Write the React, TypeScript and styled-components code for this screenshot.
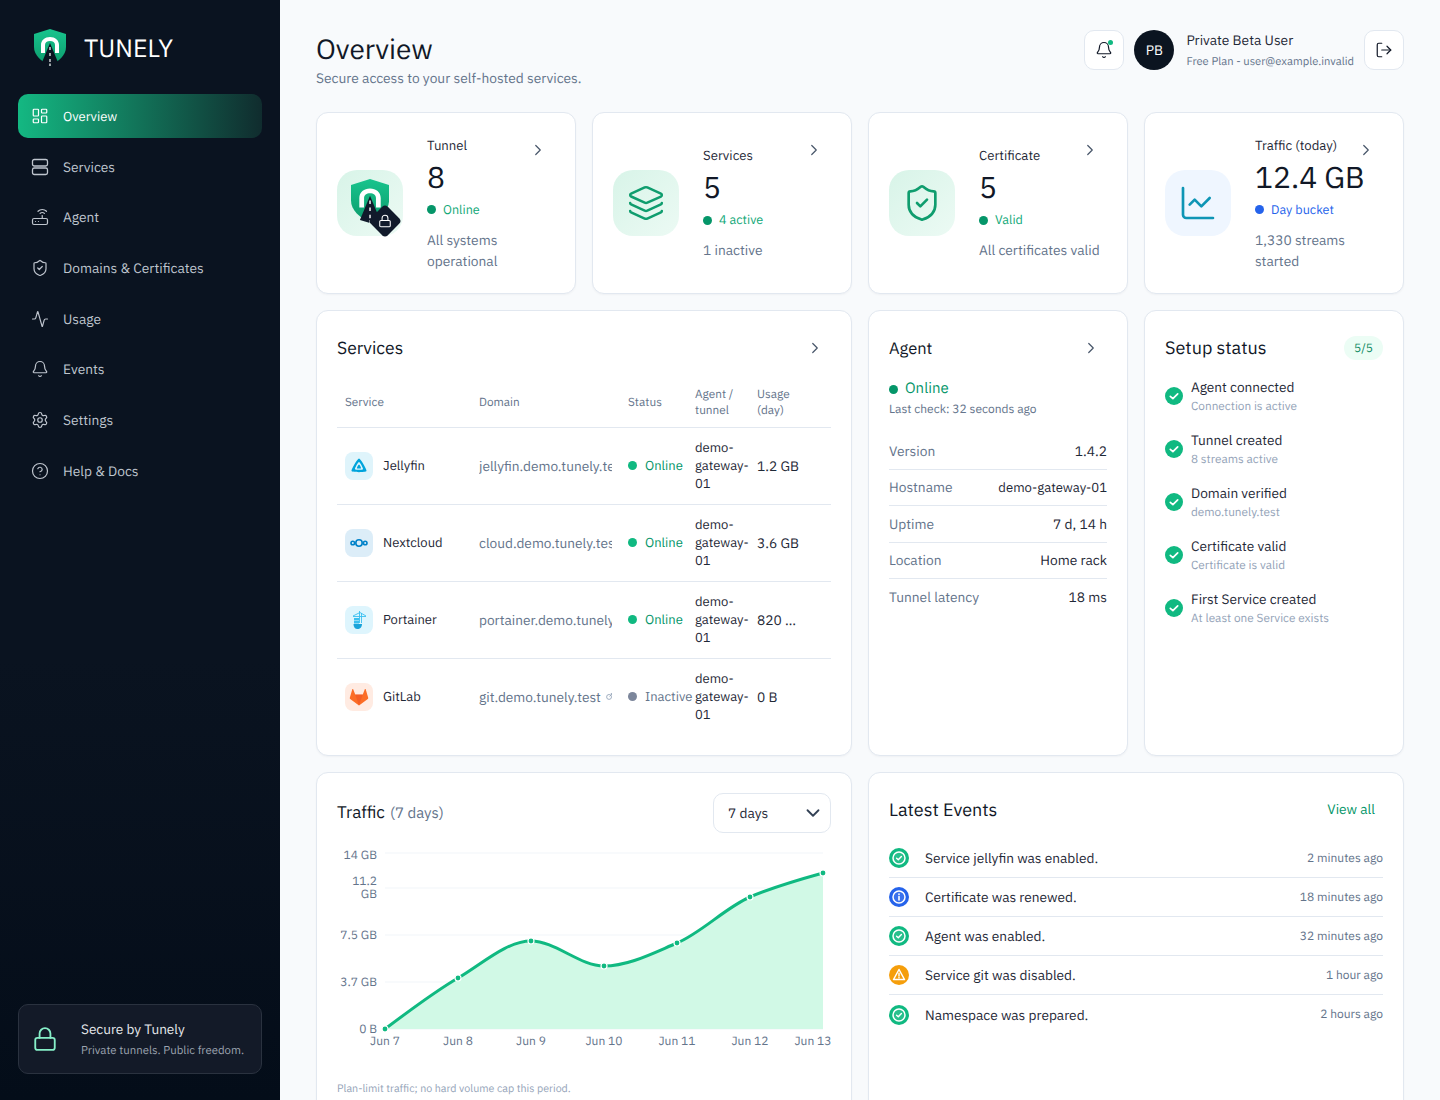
import React from 'react';
import styled, { createGlobalStyle } from 'styled-components';
import {
  Activity, Bell, ChartLine, ChevronDown, ChevronRight, CircleHelp, Layers, LayoutDashboard,
  Lock, LogOut, Router, Settings, ShieldCheck,
} from 'lucide-react';

const GlobalStyle = createGlobalStyle`
  html, body {
    margin: 0;
    padding: 0;
    height: 100%;
    overflow: hidden;
    background: #f8fafc;
    color: #111827;
    font-family: "IBM Plex Sans", Inter, "Liberation Sans", sans-serif;
    text-rendering: geometricPrecision;
  }
  * { box-sizing: border-box; }
`;

const Shell = styled.div`
  display: flex;
  height: 100vh;
  overflow: hidden;
`;

// --- sidebar ---

const Sidebar = styled.aside`
  width: 280px;
  flex: none;
  display: flex;
  flex-direction: column;
  padding: 29px 18px 26px;
  background: linear-gradient(180deg, #0a1320 0%, #0a1320 60%, #040d19 100%);
`;

const Brand = styled.div`
  display: flex;
  align-items: center;
  gap: 18px;
  padding-left: 16px;
  height: 37px;
  margin-bottom: 28px;
`;

const BrandName = styled.span`
  font-size: 25px;
  line-height: 36px;
  color: #ffffff;
`;

const Nav = styled.nav`
  display: flex;
  flex-direction: column;
  gap: 6.7px;
`;

const NavItem = styled.a<{ $active?: boolean }>`
  display: flex;
  align-items: center;
  gap: 14px;
  height: 44px;
  padding-left: 13px;
  border-radius: 10px;
  font-size: ${(p) => (p.$active ? '13px' : '13.75px')};
  color: ${(p) => (p.$active ? '#ffffff' : '#bfc5ce')};
  background: ${(p) => (p.$active ? 'linear-gradient(90deg, #14b882 0%, #102c2e 100%)' : 'transparent')};
  svg { flex: none; }
`;

const SecureCard = styled.div`
  margin-top: auto;
  height: 70px;
  display: flex;
  align-items: center;
  gap: 23px;
  padding-left: 13px;
  border-radius: 10px;
  background: #131a28;
  border: 1px solid #2a323f;
`;

const SecureTitle = styled.div`
  font-size: 13.6px;
  line-height: 18px;
  color: #e5e7eb;
`;

const SecureSub = styled.div`
  font-size: 11.4px;
  line-height: 16px;
  margin-top: 5px;
  color: #9ca3af;
`;

// --- header ---

const Main = styled.main`
  flex: 1;
  min-width: 0;
  padding: 30px 36px;
`;

const Header = styled.header`
  display: flex;
  justify-content: space-between;
  height: 82px;
`;

const PageTitle = styled.h1`
  margin: 0;
  font-size: 28px;
  line-height: 37px;
  font-weight: 400;
  color: #111827;
`;

const PageSub = styled.p`
  margin: 1px 0 0;
  font-size: 13.75px;
  line-height: 20px;
  color: #64748b;
`;

const HeaderRight = styled.div`
  display: flex;
  align-items: flex-start;
  gap: 10px;
`;

const IconButton = styled.button`
  position: relative;
  width: 40px;
  height: 40px;
  padding: 0;
  display: flex;
  align-items: center;
  justify-content: center;
  border: 1px solid #e2e8f0;
  border-radius: 10px;
  background: #ffffff;
  color: #111827;
`;

const BellDot = styled.span`
  position: absolute;
  top: 9px;
  right: 10px;
  width: 5px;
  height: 5px;
  border-radius: 50%;
  background: #10b981;
`;

const Avatar = styled.div`
  width: 40px;
  height: 40px;
  border-radius: 50%;
  display: flex;
  align-items: center;
  justify-content: center;
  background: #0b1420;
  color: #ffffff;
  font-size: 13.75px;
`;

const UserBlock = styled.div`
  margin-left: 2px;
  padding-top: 1px;
`;

const UserName = styled.div`
  font-size: 13.75px;
  line-height: 18px;
  color: #1f2937;
`;

const UserMeta = styled.div`
  font-size: 11.2px;
  line-height: 16px;
  margin-top: 5px;
  color: #64748b;
`;

// --- cards ---

const Grid = styled.div`
  display: grid;
  grid-template-columns: repeat(4, 260px);
  gap: 16px;
`;

const Card = styled.section<{ $span?: number; $height?: number }>`
  position: relative;
  grid-column: span ${(p) => p.$span ?? 1};
  height: ${(p) => (p.$height ? `${p.$height}px` : 'auto')};
  padding: 20px;
  background: #ffffff;
  border: 1px solid #e2e8f0;
  border-radius: 12px;
  box-shadow: 0 1px 2px rgba(15, 23, 42, 0.04);
`;

const StatCard = styled(Card)`
  display: flex;
  align-items: center;
  gap: 24px;
`;

const StatTile = styled.div<{ $blue?: boolean }>`
  position: relative;
  flex: none;
  width: 66px;
  height: 66px;
  border-radius: 20px;
  display: flex;
  align-items: center;
  justify-content: center;
  background: ${(p) => (p.$blue ? '#eff6ff' : 'linear-gradient(135deg, #d8f4e8 0%, #ecfaf4 100%)')};
`;

const TunnelLogo = styled.div`
  margin-top: -4px;
  display: flex;
`;

const LockBadge = styled.div`
  position: absolute;
  right: 4px;
  bottom: 1px;
  width: 28px;
  height: 28px;
  display: flex;
  align-items: center;
  justify-content: center;
  &::before {
    content: '';
    position: absolute;
    inset: 2px;
    background: #111a2b;
    border-radius: 4px;
    transform: rotate(45deg);
  }
  svg { position: relative; }
`;

const StatBody = styled.div`
  flex: 1;
  min-width: 0;
`;

const StatLabel = styled.div`
  font-size: 13.2px;
  line-height: 20px;
  color: #1f2937;
  white-space: nowrap;
`;

const StatValue = styled.div`
  font-size: 30px;
  line-height: 38px;
  margin-top: 4px;
  color: #111827;
  white-space: nowrap;
`;

const StatStatus = styled.div<{ $color: string }>`
  display: flex;
  align-items: center;
  gap: 7px;
  margin-top: 4px;
  font-size: 12.6px;
  line-height: 18px;
  color: ${(p) => p.$color};
`;

const Dot = styled.span<{ $color: string; $size?: number }>`
  flex: none;
  width: ${(p) => p.$size ?? 9}px;
  height: ${(p) => p.$size ?? 9}px;
  border-radius: 50%;
  background: ${(p) => p.$color};
`;

const StatDesc = styled.div`
  margin-top: 11px;
  font-size: 13.75px;
  line-height: 21px;
  color: #64748b;
`;

const StatChevron = styled.span`
  position: absolute;
  top: 28px;
  left: 212px;
  color: #475569;
  display: flex;
`;

const CardHead = styled.div`
  display: flex;
  align-items: center;
  justify-content: space-between;
  height: 34px;
`;

const CardTitle = styled.h2<{ $size?: number }>`
  margin: 0;
  font-size: ${(p) => p.$size ?? 18}px;
  line-height: 26px;
  font-weight: 400;
  color: #111827;
`;

const CardChevron = styled.span`
  display: flex;
  color: #475569;
  margin-right: 7px;
`;

// --- services table ---

const TableClip = styled.div`
  margin-top: 14px;
  overflow: hidden;
`;

const Table = styled.table`
  width: 560px;
  table-layout: fixed;
  border-collapse: collapse;
`;

const Th = styled.th`
  height: 48px;
  padding: 1px 8px 0;
  font-size: 11.8px;
  line-height: 16px;
  font-weight: 400;
  text-align: left;
  color: #64748b;
  border-bottom: 1px solid #e2e8f0;
`;

const Tr = styled.tr`
  &:not(:last-child) td { border-bottom: 1px solid #e2e8f0; }
`;

const Td = styled.td`
  height: 77px;
  padding: 0 8px;
  font-size: 13px;
  line-height: 18px;
  color: #1f2937;
  vertical-align: middle;
`;

const ServiceCell = styled.div`
  display: flex;
  align-items: center;
  gap: 10px;
`;

const ServiceTile = styled.div<{ $bg: string }>`
  flex: none;
  width: 28px;
  height: 28px;
  border-radius: 8px;
  display: flex;
  align-items: center;
  justify-content: center;
  background: ${(p) => p.$bg};
`;

const DomainCell = styled.div`
  display: flex;
  align-items: center;
  gap: 5px;
  overflow: hidden;
  white-space: nowrap;
  font-size: 13.7px;
  color: #64748b;
  svg { flex: none; }
`;

const StatusCell = styled.div<{ $color: string }>`
  display: flex;
  align-items: center;
  gap: 8px;
  white-space: nowrap;
  color: ${(p) => p.$color};
`;

const UsageText = styled.div`
  width: 46px;
  overflow: hidden;
  white-space: nowrap;
  text-overflow: ellipsis;
  font-size: 13.75px;
`;

const RowMenu = styled.span`
  color: #94a3b8;
`;

// --- agent card ---

const AgentStatus = styled.div`
  display: flex;
  align-items: center;
  gap: 7px;
  margin-top: 14px;
  font-size: 15px;
  line-height: 20px;
  color: #059669;
`;

const AgentCheck = styled.div`
  margin-top: 2px;
  font-size: 12px;
  line-height: 18px;
  color: #64748b;
`;

const InfoList = styled.div`
  margin-top: 14px;
`;

const InfoRow = styled.div`
  display: flex;
  justify-content: space-between;
  align-items: center;
  height: 36.5px;
  font-size: 13.75px;
  color: #1f2937;
  &:not(:last-child) { border-bottom: 1px solid #e2e8f0; }
`;

const InfoLabel = styled.span`
  color: #64748b;
`;

const InfoValue = styled.span<{ $tight?: boolean }>`
  font-size: ${(p) => (p.$tight ? '13.1px' : '13.75px')};
`;

// --- setup card ---

const Badge = styled.span`
  padding: 0 10px;
  height: 24px;
  display: flex;
  align-items: center;
  border-radius: 12px;
  font-size: 12px;
  color: #0f8a63;
  background: #ecfdf5;
`;

const SetupList = styled.div`
  display: flex;
  flex-direction: column;
  margin-top: 4px;
`;

const SetupItem = styled.div`
  display: flex;
  align-items: center;
  gap: 8px;
  height: 53px;
  svg { flex: none; }
`;

const SetupText = styled.div`
  padding-top: 1px;
`;

const SetupTitle = styled.div`
  font-size: 13.65px;
  line-height: 18px;
  color: #1f2937;
`;

const SetupSub = styled.div`
  margin-top: 3px;
  font-size: 11.8px;
  line-height: 16px;
  color: #94a3b8;
`;

// --- traffic card ---

const TrafficRange = styled.span`
  font-size: 15px;
  color: #64748b;
  margin-left: 5px;
`;

const TrafficHead = styled.div`
  display: flex;
  align-items: center;
  justify-content: space-between;
  height: 40px;
`;

const SelectBox = styled.div`
  width: 118px;
  height: 40px;
  display: flex;
  align-items: center;
  justify-content: space-between;
  padding: 0 6px 0 14px;
  border: 1px solid #e2e8f0;
  border-radius: 10px;
  font-size: 13.75px;
  color: #1f2937;
  svg { color: #334155; }
`;

const ChartSvg = styled.svg`
  display: block;
  margin-top: 12px;
  font-family: "IBM Plex Sans", Inter, sans-serif;
  font-size: 12px;
`;

const ChartNote = styled.div`
  margin-top: 30px;
  font-size: 10.7px;
  line-height: 16px;
  color: #94a3b8;
`;

// --- events card ---

const ViewAll = styled.a`
  margin: 0 8px 2px 0;
  font-size: 13.7px;
  color: #059669;
`;

const EventList = styled.div`
  margin-top: 12px;
`;

const EventRow = styled.div`
  display: flex;
  align-items: center;
  gap: 16px;
  height: 39px;
  font-size: 13.7px;
  color: #1f2937;
  svg { flex: none; }
  &:not(:last-child) { border-bottom: 1px solid #e2e8f0; }
`;

const EventText = styled.span`
  flex: 1;
`;

const EventTime = styled.span`
  font-size: 12px;
  color: #64748b;
`;

// --- drawings ---

const ShieldLogo = ({ size, road }: { size: number; road: string }) => (
  <svg width={size * 32 / 37} height={size} viewBox="0 0 32 37" fill="none">
    <defs>
      <linearGradient id="shieldFill" x1="0" y1="0" x2="0" y2="1">
        <stop offset="0" stopColor="#18c48d" />
        <stop offset="1" stopColor="#0c9a6b" />
      </linearGradient>
    </defs>
    <path d="M16 0 L32 5 V18 C32 26 25 32 16 37 C7 32 0 26 0 18 V5 Z" fill="url(#shieldFill)" />
    <path d="M7 24 V16 C7 11 11 8 16 8 C21 8 25 11 25 16 V24 H21 V16 C21 13.500 19 12 16 12 C13 12 11 13.500 11 16 V24 Z" fill="#ffffff" />
    <path d="M16 14 L24.500 34.500 L16 37 L7.500 34.500 Z" fill={road} />
    <path d="M16 18 V21 M16 24 V27 M16 30 V33 M16 34.500 V37" stroke="#ffffff" strokeWidth="1.200" />
  </svg>
);

const ServersIcon = () => (
  <svg width="18" height="18" viewBox="0 0 18 18" fill="none" stroke="currentColor" strokeWidth="1.300">
    <rect x="1.500" y="1.500" width="15" height="6.500" rx="1.800" />
    <rect x="1.500" y="10" width="15" height="6.500" rx="1.800" />
  </svg>
);

const JellyfinIcon = () => (
  <svg width="18" height="18" viewBox="0 0 18 18">
    <path d="M9 1.500 C10.500 1.500 17 12.500 16.500 14 C16 15.500 2 15.500 1.500 14 C1 12.500 7.500 1.500 9 1.500 Z M9 5 C8.200 5 4.500 11.500 5 12.300 C5.500 13 12.500 13 13 12.300 C13.500 11.500 9.800 5 9 5 Z" fill="#00a4dc" fillRule="evenodd" />
    <path d="M9 7.500 C9.600 7.500 11.300 10.800 11 11.200 C10.700 11.600 7.300 11.600 7 11.200 C6.700 10.800 8.400 7.500 9 7.500 Z" fill="#00a4dc" />
  </svg>
);

const NextcloudIcon = () => (
  <svg width="20" height="20" viewBox="0 0 20 20" fill="none" stroke="#0082c9" strokeWidth="1.600">
    <circle cx="10" cy="10" r="3.200" />
    <circle cx="3.800" cy="10" r="1.800" />
    <circle cx="16.200" cy="10" r="1.800" />
  </svg>
);

const PortainerIcon = () => (
  <svg width="18" height="20" viewBox="0 0 18 20" fill="none">
    <path d="M9.500 1 V13 M11.500 3 V13 M3 6 L10 2.500 L16 6 M3 6.500 H16" stroke="#3bc0ef" strokeWidth="0.900" />
    <path d="M4 8 H9 V10.500 H4 Z M4 11 H9 V13.500 H4 Z" fill="#3bc0ef" />
    <path d="M3.500 14 H12 C12 17 10 19 7.500 19 C5 19 3.500 17 3.500 14 Z" fill="#1aa3d9" />
  </svg>
);

const GitLabIcon = () => (
  <svg width="20" height="20" viewBox="0 0 20 20">
    <path d="M10 18.500 L1.200 12 C0.800 11.700 0.700 11.200 0.800 10.800 L3.300 2.300 C3.400 1.900 4 1.900 4.200 2.300 L6.200 7.500 H13.800 L15.800 2.300 C16 1.900 16.600 1.900 16.700 2.300 L19.200 10.800 C19.300 11.200 19.200 11.700 18.800 12 Z" fill="#fc6d26" />
    <path d="M10 18.500 L6.200 7.500 H13.800 Z" fill="#e24329" opacity="0.350" />
  </svg>
);

const TinyLink = () => (
  <svg width="7" height="7" viewBox="0 0 8 8" fill="none" stroke="#94a3b8" strokeWidth="1">
    <circle cx="3.500" cy="4.500" r="2.800" />
    <path d="M4 4 L7.500 0.500 M5.500 0.500 H7.500 V2.500" />
  </svg>
);

const CheckBadge = () => (
  <svg width="18" height="18" viewBox="0 0 18 18">
    <circle cx="9" cy="9" r="9" fill="#10b981" />
    <path d="M5.300 9.300 L7.900 11.700 L12.700 6.800" fill="none" stroke="#ffffff" strokeWidth="1.700" strokeLinecap="round" strokeLinejoin="round" />
  </svg>
);

const EventIcon = ({ kind }: { kind: 'ok' | 'info' | 'warn' }) => {
  const fill = kind === 'ok' ? '#10b981' : kind === 'info' ? '#2563eb' : '#f59e0b';
  return (
    <svg width="20" height="20" viewBox="0 0 20 20" fill="none">
      <circle cx="10" cy="10" r="10" fill={fill} />
      {kind === 'warn' ? (
        <>
          <path d="M10 4.500 L15.500 14.500 H4.500 Z" stroke="#ffffff" strokeWidth="1.500" strokeLinejoin="round" />
          <path d="M10 8.300 V11 M10 12.400 V12.900" stroke="#ffffff" strokeWidth="1.400" strokeLinecap="round" />
        </>
      ) : (
        <circle cx="10" cy="10" r="6" fill="#ffffff" fillOpacity="0.100" stroke="#ffffff" strokeWidth="1.500" />
      )}
      {kind === 'ok' && <path d="M7.600 10.200 L9.300 11.800 L12.400 8.500" stroke="#ffffff" strokeWidth="1.400" strokeLinecap="round" strokeLinejoin="round" />}
      {kind === 'info' && <path d="M10 9.500 V13 M10 7 V7.500" stroke="#ffffff" strokeWidth="1.600" strokeLinecap="round" />}
    </svg>
  );
};

// --- data ---

const navItems = [
  { label: 'Overview', icon: <LayoutDashboard size={18} strokeWidth={1.6} />, active: true },
  { label: 'Services', icon: <ServersIcon /> },
  { label: 'Agent', icon: <Router size={18} strokeWidth={1.6} /> },
  { label: 'Domains & Certificates', icon: <ShieldCheck size={18} strokeWidth={1.6} /> },
  { label: 'Usage', icon: <Activity size={18} strokeWidth={1.6} /> },
  { label: 'Events', icon: <Bell size={18} strokeWidth={1.6} /> },
  { label: 'Settings', icon: <Settings size={18} strokeWidth={1.6} /> },
  { label: 'Help & Docs', icon: <CircleHelp size={18} strokeWidth={1.6} /> },
];

const statCards = [
  {
    label: 'Tunnel', value: '8', status: 'Online', color: '#10a877', dot: '#059669', desc: 'All systems operational',
    tile: (
      <>
        <TunnelLogo><ShieldLogo size={44} road="#111a2b" /></TunnelLogo>
        <LockBadge><Lock size={14} color="#ffffff" strokeWidth={1.8} /></LockBadge>
      </>
    ),
  },
  {
    label: 'Services', value: '5', status: '4 active', color: '#10a877', dot: '#059669', desc: '1 inactive',
    tile: <Layers size={38} color="#0f9d6e" strokeWidth={1.6} />,
  },
  {
    label: 'Certificate', value: '5', status: 'Valid', color: '#10a877', dot: '#059669', desc: 'All certificates valid',
    tile: <ShieldCheck size={40} color="#0f9d6e" strokeWidth={1.6} />,
  },
  {
    label: 'Traffic (today)', value: '12.4 GB', status: 'Day bucket', color: '#2563eb', dot: '#2563eb', desc: '1,330 streams started', blue: true,
    tile: <ChartLine size={40} color="#0e95b5" strokeWidth={1.6} />,
  },
];

const services = [
  { name: 'Jellyfin', domain: 'jellyfin.demo.tunely.test', usage: '1.2 GB', online: true, bg: '#dff4fb', icon: <JellyfinIcon /> },
  { name: 'Nextcloud', domain: 'cloud.demo.tunely.test', usage: '3.6 GB', online: true, bg: '#dcedf8', icon: <NextcloudIcon /> },
  { name: 'Portainer', domain: 'portainer.demo.tunely.test', usage: '820 MB', online: true, bg: '#def5fd', icon: <PortainerIcon /> },
  { name: 'GitLab', domain: 'git.demo.tunely.test', usage: '0 B', online: false, bg: '#ffebe2', icon: <GitLabIcon /> },
];

const agentInfo = [
  ['Version', '1.4.2'],
  ['Hostname', 'demo-gateway-01'],
  ['Uptime', '7 d, 14 h'],
  ['Location', 'Home rack'],
  ['Tunnel latency', '18 ms'],
];

const setupSteps = [
  ['Agent connected', 'Connection is active'],
  ['Tunnel created', '8 streams active'],
  ['Domain verified', 'demo.tunely.test'],
  ['Certificate valid', 'Certificate is valid'],
  ['First Service created', 'At least one Service exists'],
];

const events: { text: string; time: string; kind: 'ok' | 'info' | 'warn' }[] = [
  { text: 'Service jellyfin was enabled.', time: '2 minutes ago', kind: 'ok' },
  { text: 'Certificate was renewed.', time: '18 minutes ago', kind: 'info' },
  { text: 'Agent was enabled.', time: '32 minutes ago', kind: 'ok' },
  { text: 'Service git was disabled.', time: '1 hour ago', kind: 'warn' },
  { text: 'Namespace was prepared.', time: '2 hours ago', kind: 'ok' },
];

// chart coordinates are relative to the svg, which starts at x 337, y 845
const chartPoints = [
  { x: 48, y: 184, label: 'Jun 7' },
  { x: 121, y: 133, label: 'Jun 8' },
  { x: 194, y: 96, label: 'Jun 9' },
  { x: 267, y: 121, label: 'Jun 10' },
  { x: 340, y: 98, label: 'Jun 11' },
  { x: 413, y: 52, label: 'Jun 12' },
  { x: 486, y: 28, label: 'Jun 13' },
];

const gridLines = [8, 43, 90, 137, 184];

// same curve as a monotone-x line
function monotonePath(pts: { x: number; y: number }[]) {
  const n = pts.length;
  const slopes: number[] = [];
  for (let i = 0; i < n - 1; i++) slopes.push((pts[i + 1].y - pts[i].y) / (pts[i + 1].x - pts[i].x));
  const tangents = pts.map((_, i) => {
    if (i === 0 || i === n - 1) return 0;
    const a = slopes[i - 1];
    const b = slopes[i];
    if (a * b <= 0) return 0;
    return 2 * a * b / (a + b);
  });
  tangents[0] = (3 * slopes[0] - tangents[1]) / 2;
  tangents[n - 1] = (3 * slopes[n - 2] - tangents[n - 2]) / 2;
  let d = `M${pts[0].x} ${pts[0].y}`;
  for (let i = 0; i < n - 1; i++) {
    const h = (pts[i + 1].x - pts[i].x) / 3;
    d += ` C${pts[i].x + h} ${pts[i].y + h * tangents[i]} ${pts[i + 1].x - h} ${pts[i + 1].y - h * tangents[i + 1]} ${pts[i + 1].x} ${pts[i + 1].y}`;
  }
  return d;
}

const TrafficChart = () => {
  const line = monotonePath(chartPoints);
  return (
    <ChartSvg width="494" height="205" viewBox="0 0 494 205">
      {gridLines.map((y) => <line key={y} x1="48" x2="486" y1={y} y2={y} stroke="#f1f5f9" strokeWidth="1" />)}
      <g fill="#64748b" textAnchor="end">
        <text x="40" y="14">14 GB</text>
        <text x="40" y="40">11.2</text>
        <text x="40" y="53">GB</text>
        <text x="40" y="94">7.5 GB</text>
        <text x="40" y="141">3.7 GB</text>
        <text x="40" y="188">0 B</text>
      </g>
      <path d={`${line} L486 184 L48 184 Z`} fill="#d1f9e6" />
      <path d={line} fill="none" stroke="#10b981" strokeWidth="3" strokeLinecap="round" />
      {chartPoints.map((p) => (
        <circle key={p.label} cx={p.x} cy={p.y} r="3" fill="#10b981" stroke="#ffffff" strokeWidth="1.200" />
      ))}
      <g fill="#64748b" textAnchor="middle">
        {chartPoints.map((p, i) => (
          <text key={p.label} x={i === 6 ? 476 : p.x} y="200">{p.label}</text>
        ))}
      </g>
    </ChartSvg>
  );
};

const columnWidths = [134, 149, 67, 62, 73, 75];

export default function App() {
  return (
    <Shell>
      <GlobalStyle />
      <Sidebar>
        <Brand>
          <ShieldLogo size={37} road="#0a1320" />
          <BrandName>TUNELY</BrandName>
        </Brand>
        <Nav>
          {navItems.map((item) => (
            <NavItem key={item.label} $active={item.active}>
              {item.icon}
              {item.label}
            </NavItem>
          ))}
        </Nav>
        <SecureCard>
          <Lock size={26} color="#86efc8" strokeWidth={1.7} />
          <div>
            <SecureTitle>Secure by Tunely</SecureTitle>
            <SecureSub>Private tunnels. Public freedom.</SecureSub>
          </div>
        </SecureCard>
      </Sidebar>

      <Main>
        <Header>
          <div>
            <PageTitle>Overview</PageTitle>
            <PageSub>Secure access to your self-hosted services.</PageSub>
          </div>
          <HeaderRight>
            <IconButton>
              <Bell size={18} strokeWidth={1.6} />
              <BellDot />
            </IconButton>
            <Avatar>PB</Avatar>
            <UserBlock>
              <UserName>Private Beta User</UserName>
              <UserMeta>Free Plan - user@example.invalid</UserMeta>
            </UserBlock>
            <IconButton>
              <LogOut size={18} strokeWidth={1.6} />
            </IconButton>
          </HeaderRight>
        </Header>

        <Grid>
          {statCards.map((c) => (
            <StatCard key={c.label} $height={182}>
              <StatTile $blue={c.blue}>{c.tile}</StatTile>
              <StatBody>
                <StatLabel>{c.label}</StatLabel>
                <StatValue>{c.value}</StatValue>
                <StatStatus $color={c.color}>
                  <Dot $color={c.dot} />
                  {c.status}
                </StatStatus>
                <StatDesc>{c.desc}</StatDesc>
              </StatBody>
              <StatChevron><ChevronRight size={18} strokeWidth={1.6} /></StatChevron>
            </StatCard>
          ))}

          <Card $span={2} $height={446}>
            <CardHead>
              <CardTitle $size={17.5}>Services</CardTitle>
              <CardChevron><ChevronRight size={18} strokeWidth={1.6} /></CardChevron>
            </CardHead>
            <TableClip>
              <Table>
                <colgroup>
                  {columnWidths.map((w, i) => <col key={i} width={w} />)}
                </colgroup>
                <thead>
                  <tr>
                    <Th>Service</Th>
                    <Th>Domain</Th>
                    <Th>Status</Th>
                    <Th>Agent / tunnel</Th>
                    <Th>Usage (day)</Th>
                    <Th />
                  </tr>
                </thead>
                <tbody>
                  {services.map((s) => (
                    <Tr key={s.name}>
                      <Td>
                        <ServiceCell>
                          <ServiceTile $bg={s.bg}>{s.icon}</ServiceTile>
                          {s.name}
                        </ServiceCell>
                      </Td>
                      <Td>
                        <DomainCell>{s.domain}<TinyLink /></DomainCell>
                      </Td>
                      <Td>
                        <StatusCell $color={s.online ? '#059669' : '#64748b'}>
                          <Dot $color={s.online ? '#10b981' : '#7c869b'} />
                          {s.online ? 'Online' : 'Inactive'}
                        </StatusCell>
                      </Td>
                      <Td>demo-gateway-01</Td>
                      <Td><UsageText>{s.usage}</UsageText></Td>
                      <Td><RowMenu>⋮</RowMenu></Td>
                    </Tr>
                  ))}
                </tbody>
              </Table>
            </TableClip>
          </Card>

          <Card>
            <CardHead>
              <CardTitle $size={16.5}>Agent</CardTitle>
              <CardChevron><ChevronRight size={18} strokeWidth={1.6} /></CardChevron>
            </CardHead>
            <AgentStatus>
              <Dot $color="#059669" />
              Online
            </AgentStatus>
            <AgentCheck>Last check: 32 seconds ago</AgentCheck>
            <InfoList>
              {agentInfo.map(([k, v]) => (
                <InfoRow key={k}>
                  <InfoLabel>{k}</InfoLabel>
                  <InfoValue $tight={k === 'Hostname'}>{v}</InfoValue>
                </InfoRow>
              ))}
            </InfoList>
          </Card>

          <Card>
            <CardHead>
              <CardTitle>Setup status</CardTitle>
              <Badge>5/5</Badge>
            </CardHead>
            <SetupList>
              {setupSteps.map(([t, s]) => (
                <SetupItem key={t}>
                  <CheckBadge />
                  <SetupText>
                    <SetupTitle>{t}</SetupTitle>
                    <SetupSub>{s}</SetupSub>
                  </SetupText>
                </SetupItem>
              ))}
            </SetupList>
          </Card>

          <Card $span={2} $height={350}>
            <TrafficHead>
              <CardTitle $size={17}>Traffic<TrafficRange>(7 days)</TrafficRange></CardTitle>
              <SelectBox>
                7 days
                <ChevronDown size={22} strokeWidth={2} />
              </SelectBox>
            </TrafficHead>
            <TrafficChart />
            <ChartNote>Plan-limit traffic; no hard volume cap this period.</ChartNote>
          </Card>

          <Card $span={2} $height={350}>
            <CardHead>
              <CardTitle>Latest Events</CardTitle>
              <ViewAll>View all</ViewAll>
            </CardHead>
            <EventList>
              {events.map((e) => (
                <EventRow key={e.text}>
                  <EventIcon kind={e.kind} />
                  <EventText>{e.text}</EventText>
                  <EventTime>{e.time}</EventTime>
                </EventRow>
              ))}
            </EventList>
          </Card>
        </Grid>
      </Main>
    </Shell>
  );
}
